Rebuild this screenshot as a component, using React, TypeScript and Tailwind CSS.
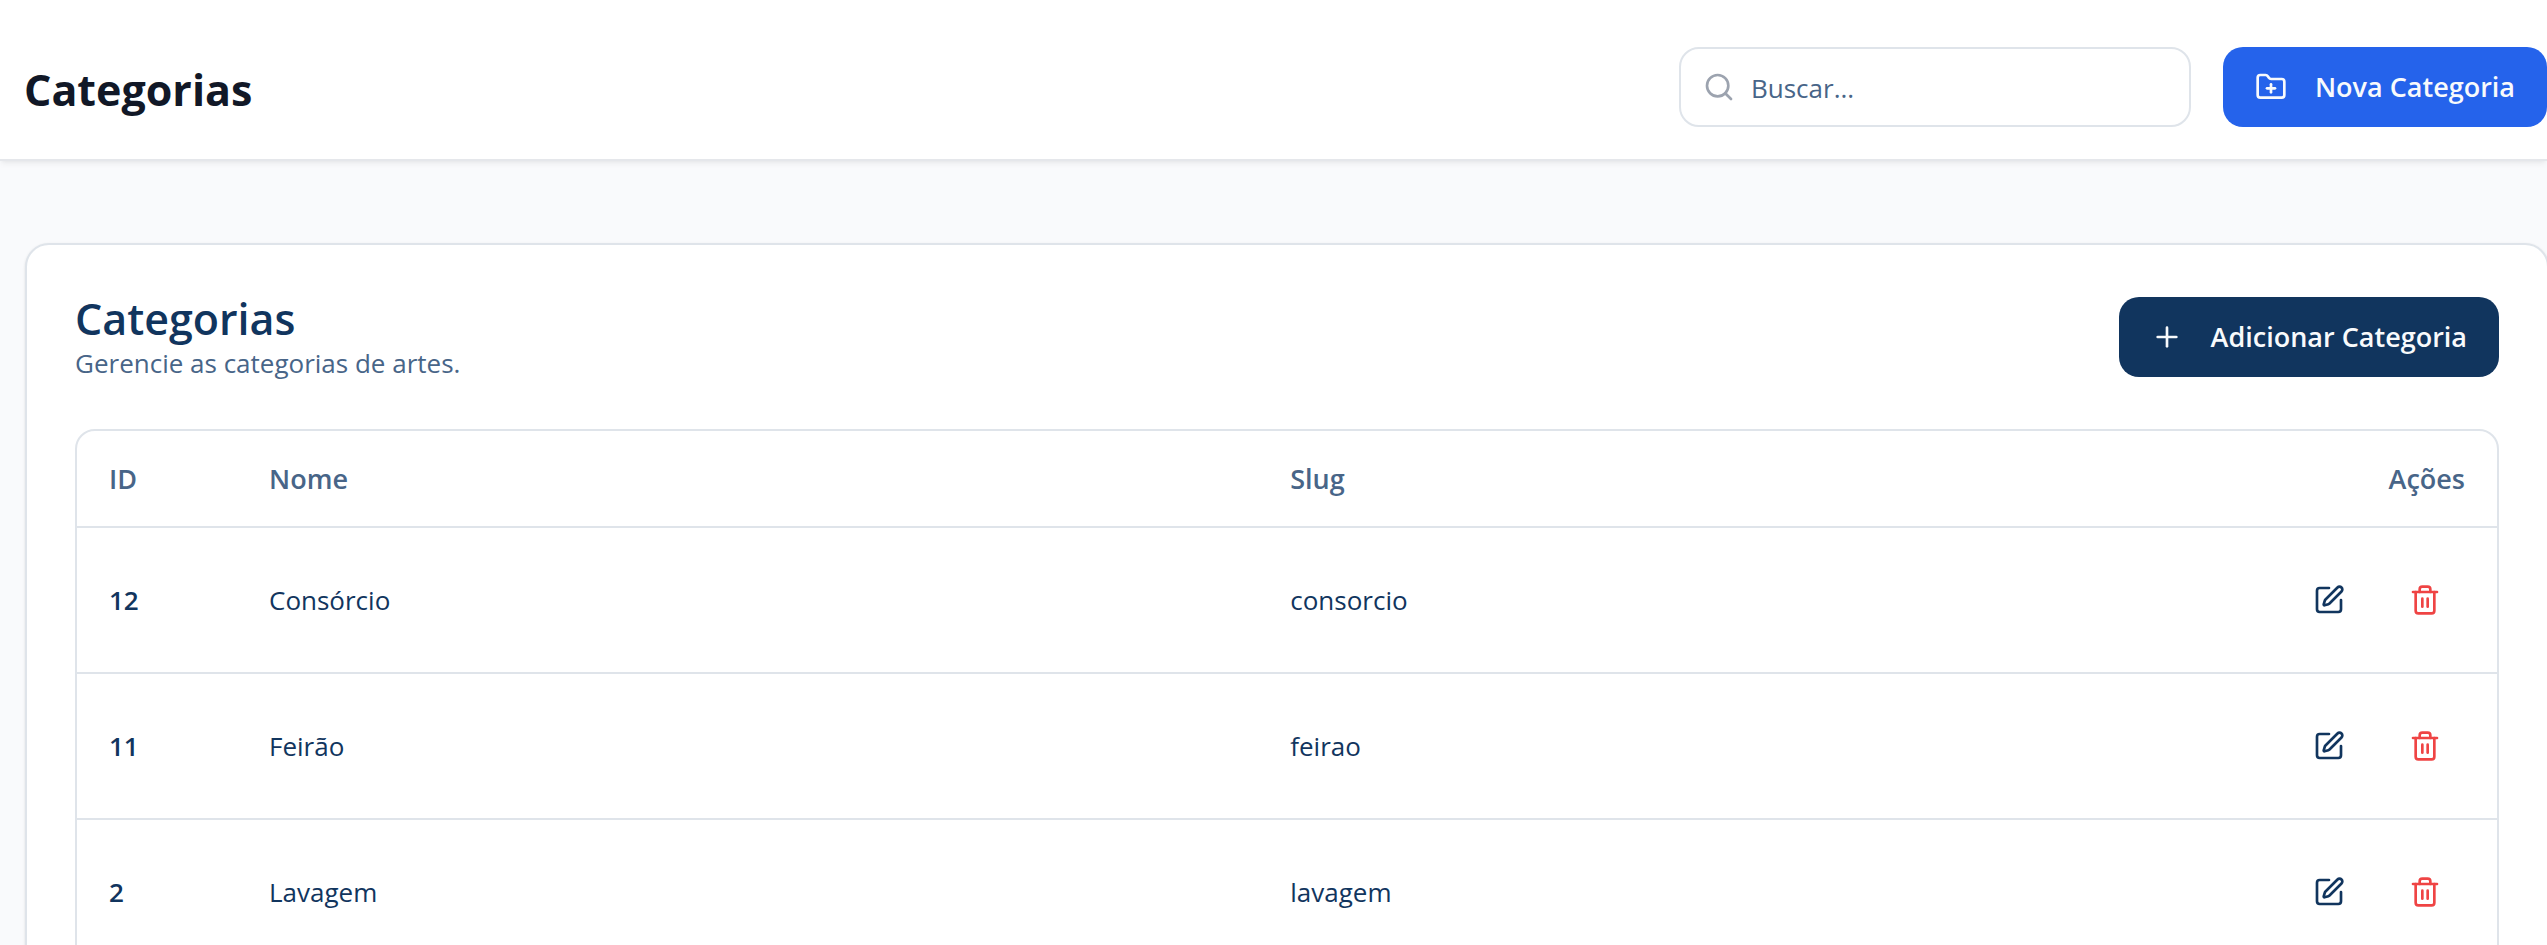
import { FolderPlus, Plus, Search, SquarePen, Trash2 } from "lucide-react";

type Category = { id: number; name: string; slug: string };

const categories: Category[] = [
  { id: 12, name: "Consórcio", slug: "consorcio" },
  { id: 11, name: "Feirão", slug: "feirao" },
  { id: 2, name: "Lavagem", slug: "lavagem" },
];

function PageHeader() {
  return (
    <header className="flex items-center justify-between border-b-2 border-[#e5e7eb] bg-white pt-[47px] pb-8 pl-6 shadow-md shadow-black/5">
      <h1 className="pt-1.5 text-[43px] leading-[60px] font-bold text-[#111827]">Categorias</h1>
      <div className="flex items-center gap-8">
        <label className="flex h-20 w-[512px] items-center gap-4 rounded-[20px] border-2 border-[#dfe4ea] bg-white px-[22px]">
          <Search className="size-8 shrink-0 text-[#9ca3af]" aria-hidden="true" />
          <input
            type="search"
            aria-label="Buscar"
            placeholder="Buscar..."
            className="w-full min-w-0 bg-transparent pt-0.5 text-[26px] leading-10 outline-none placeholder:text-[#486588]"
          />
        </label>
        <button type="button" className="flex h-20 items-center gap-7 rounded-[20px] bg-[#2563eb] px-8 text-[27px] font-semibold text-slate-50">
          <FolderPlus className="size-8" aria-hidden="true" />
          Nova Categoria
        </button>
      </div>
    </header>
  );
}

function CategoryRow({ category }: { category: Category }) {
  return (
    <tr className="border-t-2 border-[#dfe4ea]">
      <td className="p-8 font-semibold">{category.id}</td>
      <td className="p-8">{category.name}</td>
      <td className="p-8">{category.slug}</td>
      <td className="p-8">
        <div className="flex justify-end gap-4">
          <button type="button" aria-label={`Editar ${category.name}`} className="grid size-20 place-items-center rounded-[20px]">
            <SquarePen className="size-8" aria-hidden="true" />
          </button>
          <button type="button" aria-label={`Excluir ${category.name}`} className="grid size-20 place-items-center rounded-[20px] text-[#ef4444]">
            <Trash2 className="size-8" aria-hidden="true" />
          </button>
        </div>
      </td>
    </tr>
  );
}

export default function App() {
  return (
    <div className="h-screen overflow-hidden bg-[#f9fafc] font-['Open_Sans','Noto_Sans',sans-serif] text-[#11355e]">
      <PageHeader />
      <main className="-mr-0.5 pt-[82px] pl-[25px]">
        <section className="rounded-[24px] border-2 border-[#dfe4ea] bg-white px-12 pt-12 pb-12 shadow-sm">
          <div className="flex items-center justify-between">
            <div>
              <h2 className="text-[43px] leading-[52px] font-semibold">Categorias</h2>
              <p className="text-[26px] leading-9 text-[#486588]">Gerencie as categorias de artes.</p>
            </div>
            <button type="button" className="flex h-20 items-center gap-7 rounded-[20px] bg-[#11355e] px-8 text-[27px] font-semibold text-slate-50">
              <Plus className="size-8" aria-hidden="true" />
              Adicionar Categoria
            </button>
          </div>
          <div className="mt-12 overflow-hidden rounded-[20px] border-2 border-[#dfe4ea]">
            <table className="w-full table-fixed border-collapse text-left text-[26px] leading-10">
              <thead>
                <tr className="h-24 text-[#486588]">
                  <th scope="col" className="w-40 px-8 text-[27px] font-semibold">ID</th>
                  <th scope="col" className="w-[42.2%] px-8 text-[27px] font-semibold">Nome</th>
                  <th scope="col" className="px-8 text-[27px] font-semibold">Slug</th>
                  <th scope="col" className="w-60 px-8 text-right text-[27px] font-semibold">Ações</th>
                </tr>
              </thead>
              <tbody>
                {categories.map((category) => (
                  <CategoryRow key={category.id} category={category} />
                ))}
              </tbody>
            </table>
          </div>
        </section>
      </main>
    </div>
  );
}
